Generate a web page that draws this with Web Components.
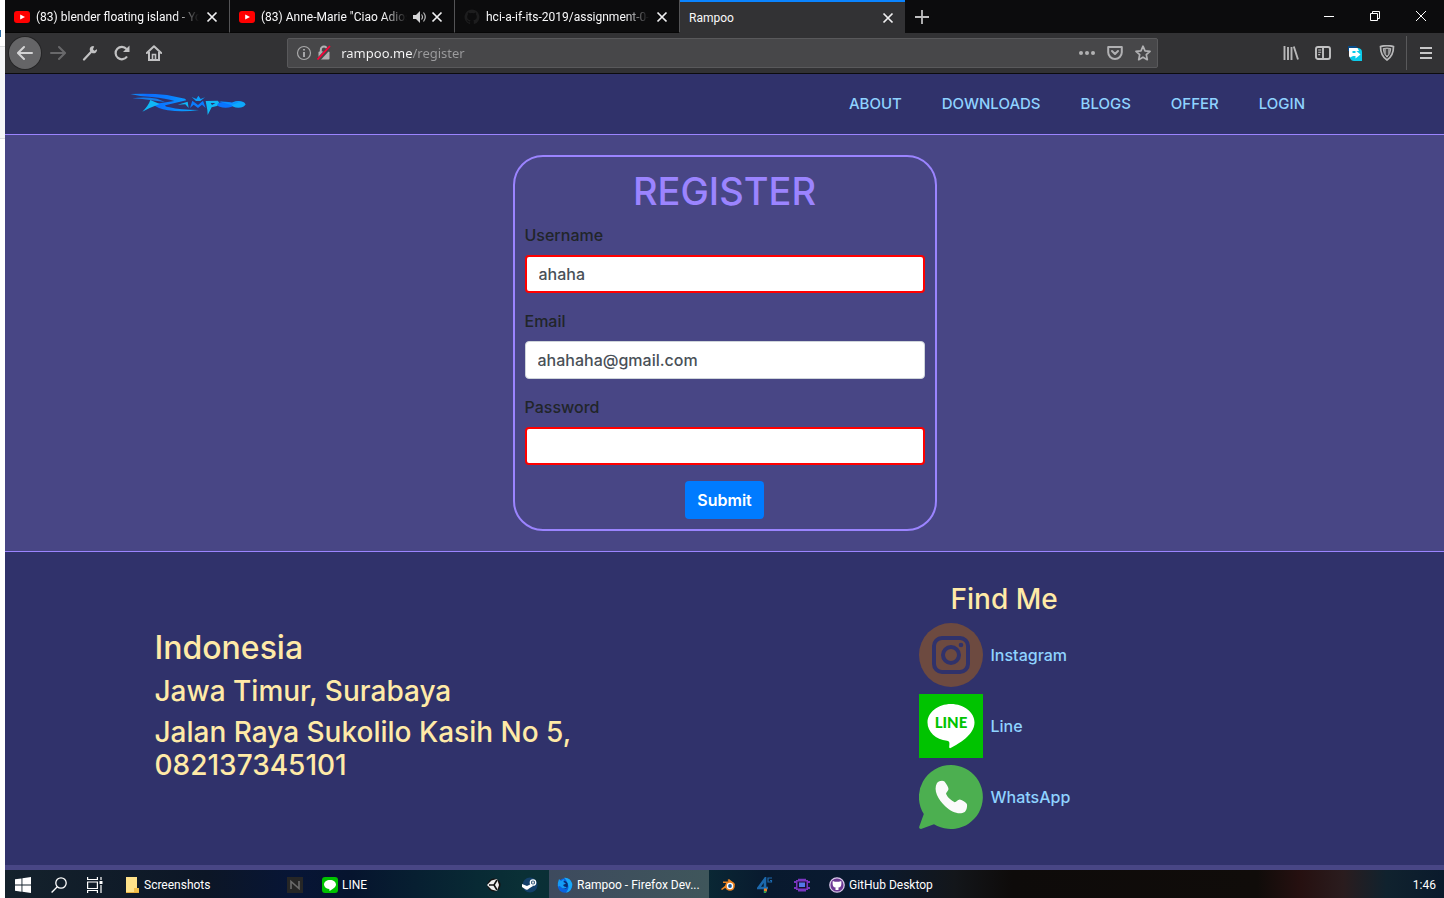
<!DOCTYPE html>
<html lang="en">
<head>
<meta charset="utf-8">
<title>Rampoo</title>
<style>
  html, body { margin: 0; }
  body { background: #fff; font-family: Inter, "Noto Sans", sans-serif; }
</style>
</head>
<body>
<desktop-screen></desktop-screen>
<script>
const SHARED = `
  *, *::before, *::after { box-sizing: border-box; }
  svg { display: block; flex: none; }
  button { font: inherit; color: inherit; background: none; border: 0; padding: 0; margin: 0; cursor: pointer; }
  a { color: inherit; text-decoration: none; }
`;
function define(name, css, html, setup) {
  customElements.define(name, class extends HTMLElement {
    connectedCallback() {
      if (this.shadowRoot) return;
      const root = this.attachShadow({ mode: 'open' });
      root.innerHTML = `<style>${SHARED}${css}</style>${html}`;
      if (setup) setup(this, root);
    }
  });
}

const YT = `<svg slot="icon" width="16" height="16" viewBox="0 0 16 16"><rect y="2" width="16" height="12" rx="3" fill="#f00"/><path d="M6.2 5.4v5.2L11 8z" fill="#fff"/></svg>`;
const OCTO = `<svg slot="icon" width="16" height="16" viewBox="0 0 16 16"><path fill="#1d1d1e" d="M8 .5a7.5 7.5 0 0 0-2.4 14.6c.4.1.5-.2.5-.4v-1.4c-2.1.5-2.5-.9-2.5-.9-.3-.9-.8-1.1-.8-1.1-.7-.5 0-.5 0-.5.8.1 1.2.8 1.2.8.6 1.2 1.7.8 2.1.6.1-.5.3-.8.5-1-1.700-.2-3.400-.8-3.400-3.700 0-.8.3-1.500.8-2-.1-.2-.3-1 .1-2 0 0 .6-.2 2 .8a7 7 0 0 1 3.800 0c1.400-1 2-.8 2-.8.4 1 .2 1.800.1 2 .5.5.8 1.200.8 2 0 2.900-1.800 3.500-3.500 3.700.3.2.5.7.5 1.400v2.100c0 .2.1.4.5.4A7.500 7.500 0 0 0 8 .5z"/></svg>`;

/* ---------- browser window chrome ---------- */
define('browser-tab', `
  :host { display: flex; flex: 0 1 225px; min-width: 0; align-items: center; gap: 6px; height: 33px; padding: 2px 10px 0 9px;
          color: #f9f9fa; font: 12px/16px Roboto, "Noto Sans", sans-serif; border-right: 1px solid #545456; border-bottom: 1px solid #060606; }
  :host([active]) { background: #323234; border-right: 0; border-bottom: 0; box-shadow: inset 0 2px #0a84ff; }
  .title { flex: 1; min-width: 0; overflow: hidden; white-space: nowrap; }
  :host(:not([active])) .title { -webkit-mask-image: linear-gradient(to left, transparent, #000 24px); mask-image: linear-gradient(to left, transparent, #000 24px); }
  ::slotted([slot="sound"]) { margin-right: -3px; }
`, `<slot name="icon"></slot><span class="title"><slot></slot></span><slot name="sound"></slot>
  <button aria-label="Close tab"><svg width="14" height="14" viewBox="0 0 14 14"><path d="M2.500 2.500l9 9M11.500 2.500l-9 9" stroke="#f0f0f1" stroke-width="1.700" fill="none"/></svg></button>`);

define('tab-strip', `
  :host { display: flex; height: 33px; background: #0c0c0d; }
  .new { width: 34px; display: grid; place-items: center; }
  .win { margin-left: auto; display: flex; }
  .win button { width: 46px; height: 32px; display: grid; place-items: center; }
`, `
  <browser-tab>${YT}(83) blender floating island - YouTube</browser-tab>
  <browser-tab>${YT}(83) Anne-Marie "Ciao Adios" - YouTube
    <svg slot="sound" width="14" height="14" viewBox="0 0 14 14"><path d="M0 5h3l4-4v12L3 9H0z" fill="#d4d4d5"/><path d="M8.500 4.500q2 2.500 0 5M10.500 2.500q3.500 4.500 0 9" fill="none" stroke="#bbb" stroke-width="1.200"/></svg>
  </browser-tab>
  <browser-tab>${OCTO}hci-a-if-its-2019/assignment-0-group</browser-tab>
  <browser-tab active>Rampoo</browser-tab>
  <button class="new" aria-label="New tab"><svg width="14" height="14" viewBox="0 0 14 14"><path d="M7 0v14M0 7h14" stroke="#bebebf" stroke-width="1.800"/></svg></button>
  <div class="win">
    <button aria-label="Minimize"><svg width="10" height="10"><path d="M0 5.500h10" stroke="#fff"/></svg></button>
    <button aria-label="Restore"><svg width="10" height="10" fill="none" stroke="#fff"><path d="M.5 2.500h7v7h-7zM2.500 2.500v-2h7v7h-2"/></svg></button>
    <button aria-label="Close"><svg width="10" height="10" stroke="#fff"><path d="M0 0l10 10M10 0L0 10"/></svg></button>
  </div>`);

define('address-bar', `
  :host { display: flex; align-items: center; height: 30px; padding: 0 6px 0 8px; background: #474749; border: 1px solid #59595b; border-radius: 2px; }
  input { flex: 1; min-width: 0; margin: 0 0 0 9px; padding: 0; border: 0; outline: 0; font: 13px/20px "Noto Sans", sans-serif; color: #f9f9fa;
          background: linear-gradient(to right, #f9f9fa 71px, #9c9c9e 71px); -webkit-background-clip: text; background-clip: text; -webkit-text-fill-color: transparent; }
  .acts { display: flex; gap: 12px; }
  .ids { display: flex; gap: 4px; }
`, `
  <span class="ids">
  <svg width="16" height="16" viewBox="0 0 16 16"><circle cx="8" cy="8" r="6.500" fill="none" stroke="#a9a9aa" stroke-width="1.200"/><path d="M8 7v5M8 4v1.600" stroke="#b1b1b3" stroke-width="1.800"/></svg>
  <svg width="16" height="16" viewBox="0 0 16 16"><path d="M4.800 7V4.800a3.200 3.200 0 0 1 6.400 0V7" fill="none" stroke="#b1b1b3" stroke-width="2"/><rect x="2.500" y="6.500" width="11" height="8" rx="1" fill="#b1b1b3"/><path d="M2 15L14.500 1.500" stroke="#474749" stroke-width="4"/><path d="M1.500 14.500L14 1" stroke="#ff0039" stroke-width="1.800"/></svg>
  </span>
  <input aria-label="Address" value="rampoo.me/register">
  <span class="acts">
    <button aria-label="Page actions"><svg width="16" height="16" fill="#b1b1b3"><circle cx="2" cy="8" r="2"/><circle cx="8" cy="8" r="2"/><circle cx="14" cy="8" r="2"/></svg></button>
    <button aria-label="Save to Pocket"><svg width="16" height="16" fill="none" stroke="#b1b1b3" stroke-width="2" stroke-linecap="round" stroke-linejoin="round"><path d="M1.200 2h13.600v5.200a6.800 6.800 0 0 1-13.600 0zM5 6l3 3 3-3"/></svg></button>
    <button aria-label="Bookmark"><svg width="16" height="16" fill="none" stroke="#b1b1b3" stroke-width="1.700" stroke-linejoin="round"><path d="M8 1.200l2 4.600 5 .5-3.700 3.400 1 5L8 12.200l-4.300 2.500 1-5L1 6.300l5-.5z"/></svg></button>
  </span>`);

define('tool-bar', `
  :host { display: flex; align-items: center; height: 41px; padding: 0 2px 0 4px; background: #323234; border-bottom: 1px solid #0c0c0d; }
  button { width: 32px; height: 32px; flex: none; display: grid; place-items: center; }
  .back { border-radius: 50%; background: #656567; box-shadow: 0 0 0 1px #252526; margin-right: 1px; }
  .gap { flex: 117 1 0; }
  address-bar { flex: 853 1 0; }
  .sep { width: 1px; height: 34px; margin: 0 3px; background: #59595b; }
`, `
  <button class="back" aria-label="Back"><svg width="16" height="16" fill="none" stroke="#d4d4d5" stroke-width="2" stroke-linecap="round"><path d="M15 8H1.500M7 2L1 8l6 6"/></svg></button>
  <button aria-label="Forward"><svg width="16" height="16" fill="none" stroke="#69696b" stroke-width="2" stroke-linecap="round"><path d="M1 8h13.500M9 2l6 6-6 6"/></svg></button>
  <button aria-label="Developer tools"><svg width="16" height="16"><path d="M2 14.500l7-7.500" stroke="#c2c2c3" stroke-width="2.200" stroke-linecap="round"/><path d="M11 1c-2.500.3-3.800 2.400-3 4.800l2.400 2.400c2.300.7 4.500-.8 4.700-3.200l-.3-.8-2.400 1.500-1.500-1.500 1.300-2.600z" fill="#c2c2c3"/></svg></button>
  <button aria-label="Reload"><svg width="16" height="16"><path d="M13 11.500A6.200 6.200 0 1 1 12.500 4" fill="none" stroke="#c2c2c3" stroke-width="2.200"/><path d="M15.500.5V7H9z" fill="#c2c2c3"/></svg></button>
  <button aria-label="Home"><svg width="16" height="16" fill="none" stroke="#c2c2c3"><path d="M.8 8L8 1.200 15.200 8" stroke-width="2" stroke-linecap="round" stroke-linejoin="round"/><path d="M3 7v8h10V7" stroke-width="2"/><path d="M6.500 14V9.500h3V14" stroke-width="1.600"/></svg></button>
  <span class="gap"></span>
  <address-bar></address-bar>
  <span class="gap"></span>
  <button aria-label="Library"><svg width="16" height="16" stroke="#b7b7b8" stroke-width="1.900"><path d="M1.500 1v14M5 2v13M8.500 2v13M10.800 1.500l4.200 13"/></svg></button>
  <button aria-label="Sidebar"><svg width="16" height="16" fill="none" stroke="#c2c2c3" stroke-width="1.900"><rect x="1" y="2" width="14" height="12" rx="2"/><path d="M8 2v12"/><path d="M3.200 5h3M3.200 7.300h3M3.200 9.600h2" stroke-width="1.100"/></svg></button>
  <button aria-label="Extension"><svg width="16" height="16"><path d="M2 3h9q4 .5 4 4v9H7q-3 0-4-3z" fill="#0ccbea"/><path d="M1 1h8l2 2H3v3H1z" fill="#064a86"/><path d="M2 3h8.500L12 6H6v5l-3 1.500q-1-.5-1-2z" fill="#fff"/><path d="M5.500 6H8v2H5.500z" fill="#0ccbea"/><path d="M4 8h4.500V5.200L13.500 9.500 8.500 13.500V11H4z" fill="#fff"/></svg></button>
  <button aria-label="Shield"><svg width="16" height="16" fill="none" stroke="#b9b9ba"><path d="M1.500 1.600Q8-.4 14.500 1.600 14.500 11 8 15 1.500 11 1.500 1.600z" stroke-width="1.700"/><path d="M4.200 3.600q3.800-1 7.600 0-.3 5.500-3.800 8.600-3.500-3.100-3.800-8.600z" fill="#8f8f90"/><path d="M8 4v6" stroke="#323234" stroke-width="1.600"/></svg></button>
  <span class="sep"></span>
  <button aria-label="Menu"><svg width="12" height="14" stroke="#c8c8c9" stroke-width="2"><path d="M0 2h12M0 7h12M0 12h12"/></svg></button>`);

/* ---------- the web site ---------- */
define('site-logo', `:host { display: block; }`, `
  <a href="#" aria-label="Rampoo home"><svg width="117" height="24" viewBox="31 38 351 72">
    <defs><linearGradient id="g"><stop stop-color="#1590f4"/><stop offset=".25" stop-color="#0a6cff"/><stop offset=".55" stop-color="#0a7cff"/><stop offset="1" stop-color="#0bb0ff"/></linearGradient></defs>
    <path fill="url(#g)" d="M32 44Q90 41 142 47L196 58 200 63 140 77Q128 80 150 84 180 92 238 92 190 99 144 93 114 88 100 75L164 65Q140 57 96 53 60 51 32 44z"/>
    <path fill="#157ce8" d="M38 57Q74 51 112 58L136 68 96 63Q68 58 38 57z"/>
    <path fill="#10b8f6" d="M92 62L120 74 90 86 68 97Q86 80 92 62z"/>
    <path fill="#10b8f6" d="M174 76L204 67 207 86 197 75z"/>
    <path fill="#0a7cff" d="M211 86L218 64 235 77 250 64 258 86 247 76 235 86 222 76z"/>
    <path fill="#0aa0ff" d="M216 53L230 59 236 49 243 59 256 54 242 65 229 65z"/>
    <path fill="#10b8f6" d="M258 65L294 64Q304 72 292 80L276 84 264 107 263 92z"/>
    <path fill="#30326b" d="M273 71h14l-10 6z"/>
    <ellipse cx="318" cy="76" rx="25" ry="9" fill="#0a74ff"/><ellipse cx="356" cy="75" rx="21" ry="10" fill="#0ea8fa"/>
    <path fill="#0a90ff" d="M296 65l40 5 30-5-30 13z"/>
  </svg></a>`);

define('site-nav', `
  :host { display: flex; align-items: center; justify-content: space-between; height: 61px; padding: 0 139px 0 125px;
          background: #30326b; border-bottom: 1px solid #9b84ff; color: #8fd3ff; font: 500 15px/24px Inter, sans-serif; }
  nav { display: flex; gap: 40px; }
`, `<site-logo></site-logo>
  <nav><a href="#">ABOUT</a><a href="#">DOWNLOADS</a><a href="#">BLOGS</a><a href="#">OFFER</a><a href="#">LOGIN</a></nav>`);

define('form-field', `
  :host { display: flex; flex-direction: column; gap: 8px; }
  label { color: #212529; font: 500 16px/24px Inter, sans-serif; }
  input { width: 100%; height: 38px; margin: 0; padding: 0 12px; border: 1px solid #ced4da; border-radius: 4px; background: #fff;
          color: #495057; font: 500 16px/24px Inter, sans-serif; outline: 0; }
  :host([invalid]) input { border: 2px solid #f00; }
`, `<label for="f"></label><input id="f">`, (host, root) => {
  root.querySelector('label').textContent = host.getAttribute('label');
  const input = root.querySelector('input');
  input.type = host.getAttribute('type');
  input.value = host.getAttribute('value') || '';
});

define('register-form', `
  :host { display: block; padding: 20px; background: #484685; border-bottom: 1px solid #9b84ff; }
  form { display: flex; flex-direction: column; gap: 16px; max-width: 424px; margin: 0 auto; padding: 10px; border: 2px solid #9b84ff; border-radius: 30px; }
  h1 { margin: 0 0 -8px; text-align: center; color: #9b84ff; font: 500 38px/48px Inter, sans-serif; }
  button { align-self: center; height: 38px; padding: 0 12px; border-radius: 4px; background: #007bff; color: #fff; font: 600 16px/24px Inter, sans-serif; }
`, `<form onsubmit="return false">
  <h1>REGISTER</h1>
  <form-field label="Username" type="text" value="ahaha" invalid></form-field>
  <form-field label="Email" type="email" value="ahahaha@gmail.com"></form-field>
  <form-field label="Password" type="password" invalid></form-field>
  <button type="submit">Submit</button>
</form>`);

define('contact-link', `
  :host { display: block; }
  a { display: flex; align-items: center; gap: 8px; color: #8fd3ff; font: 500 16px/24px Inter, sans-serif; }
`, `<a href="#"><slot name="icon"></slot><slot></slot></a>`);

define('site-footer', `
  :host { display: block; flex: 1; background: #30326b; border-bottom: 5px solid #484685; color: #ffeaa7; }
  .wrap { display: grid; grid-template-columns: 1fr 376px; align-items: center; max-width: 1140px; margin: 0 auto; padding: 30px 0; }
  h2, h3 { margin: 0; font: 500 28px/33px Inter, sans-serif; }
  h2 { font-size: 32px; line-height: 38px; }
  address { display: grid; gap: 8px; font-style: normal; }
  .find { display: grid; gap: 7px; padding-top: 1px; }
  .find h3 { padding-left: 32px; }
`, `<div class="wrap">
  <address><h2>Indonesia</h2><h3>Jawa Timur, Surabaya</h3><h3>Jalan Raya Sukolilo Kasih No 5,<br>082137345101</h3></address>
  <section class="find"><h3>Find Me</h3>
    <contact-link><svg slot="icon" width="64" height="64" viewBox="0 0 64 64"><circle cx="32" cy="32" r="32" fill="#6d4a40"/><g fill="none" stroke="#30326b"><rect x="15" y="15" width="34" height="34" rx="8" stroke-width="4"/><circle cx="32" cy="32" r="8" stroke-width="4"/></g><circle cx="42" cy="22" r="2.300" fill="#30326b"/></svg>Instagram</contact-link>
    <contact-link><svg slot="icon" width="64" height="64" viewBox="0 0 64 64"><path fill="#00c300" d="M0 0h64v64H0z"/><path fill="#fff" d="M32 10C19 10 8.500 18.300 8.500 28.500c0 9.300 8.300 17 19.500 18.300 2.500.5 2.700 1.500 2.200 6.200 0 1.200.8 1.400 1.800.8C40 49.500 55.500 41 55.500 28.500 55.500 18.300 45 10 32 10z"/><text x="32" y="34" text-anchor="middle" font-family="Lato, sans-serif" font-weight="900" font-size="15" fill="#00c300">LINE</text></svg>Line</contact-link>
    <contact-link><svg slot="icon" width="64" height="64" viewBox="0 0 64 64"><path fill="#4caf50" d="M32 0a32 32 0 1 1-17 59.200L2 64Q-.5 64 .3 61.500L4.800 49A32 32 0 0 1 32 0z"/><path fill="#fafafa" d="M18 18c2-2.500 6-3 7.500-1.500C27 18.500 29.500 22 29.500 24c0 1.800-2.500 3.200-2.500 4.800 1.500 3.700 5.500 7 8.700 8.400 1.800 0 3-2.700 5-2.700 2 .3 5.500 2.300 7 4.300 1 2 0 6.500-2 8.200-5 3-13 .5-19.500-5.800C19 34.500 14 25 18 18z"/></svg>WhatsApp</contact-link>
  </section>
</div>`);

/* ---------- desktop ---------- */
define('task-item', `
  :host { display: block; flex: 0 0 36px; height: 28px; }
  :host([wide]) { flex: 0 1 160px; min-width: 0; }
  :host([active]) { background: linear-gradient(90deg, #3d4a5e, #3f565b); }
  button { display: flex; align-items: center; justify-content: center; gap: 4px; width: 100%; height: 28px; padding-top: 2px; color: #fff; font: 12px/16px Roboto, "Noto Sans", sans-serif; white-space: nowrap; }
  :host([wide]) button { justify-content: flex-start; padding-left: 8px; }
`, `<button><slot name="icon"></slot><slot></slot></button>`);

define('task-bar', `
  :host { display: flex; gap: 1px; height: 28px; background: linear-gradient(90deg, #14222c 0, #0c1626 14%, #071536 20%, #06142e 24%, #082a34 33%, #0a3036 36%, #0a2a35 48%, #08192e 53%, #0a1a30 60%, #13161a 66%, #0e0b0a 70%, #100c0a 87%, #261010 90%, #2a1c1e 93%, #10222e 96%, #0a1a2c 100%); }
  .sys { display: flex; margin-right: 2px; }
  time { margin-left: auto; padding-right: 8px; color: #fff; font: 12px/30px Roboto, "Noto Sans", sans-serif; }
`, `
  <div class="sys">
    <task-item><svg slot="icon" width="16" height="16" fill="#fff"><path d="M0 2.300L6.500 1.400V7.600H0zM7.400 1.300L16 0v7.600H7.400zM0 8.500h6.500v6.200L0 13.800zM7.400 8.500H16V16l-8.600-1.200z"/></svg></task-item>
    <task-item><svg slot="icon" width="16" height="16" fill="none" stroke="#fff" stroke-width="1.300"><circle cx="10" cy="6" r="5.200"/><path d="M6.300 9.700L.6 15.500"/></svg></task-item>
    <task-item><svg slot="icon" width="16" height="16" fill="none" stroke="#fff" stroke-width="1.200"><path d="M.6 0v2.500h9.800V0M.6 5v6.500h9.800V5zM.6 16v-2.500h9.800V16M14 0v3M14 8v8"/><path d="M12.500 4h3v3h-3z" fill="#fff" stroke="none"/></svg></task-item>
  </div>
  <task-item wide><svg slot="icon" width="16" height="16"><path d="M2 0h11v16H2z" fill="#ffe28a"/><path d="M10 11h5v5h-5z" fill="#f4c04c"/><path d="M2 15h13v1H2z" fill="#e9b23f"/></svg>Screenshots</task-item>
  <task-item><svg slot="icon" width="16" height="16"><path d="M0 0h16v16H0z" fill="#262626"/><path d="M4 12V4.500l8 7V4" fill="none" stroke="#6c6c6c" stroke-width="1.600"/></svg></task-item>
  <task-item wide><svg slot="icon" width="16" height="16"><rect width="16" height="16" rx="3" fill="#00c300"/><path d="M8 3c-3.400 0-6 2-6 4.600 0 2.300 2 4 5 4.500.6.300.5 1 .4 2C10 12.500 14 10.500 14 7.600 14 5 11.400 3 8 3z" fill="#fff"/></svg>LINE</task-item>
  <task-item><svg slot="icon" width="16" height="16"><circle cx="9" cy="8" r="6.500" fill="#16110f"/><path d="M2 8l4.500-4.500L12 2l2 6-2 6-5.500-1.500z" fill="#eee"/><path d="M4 8h5l3-5M9 8l3 5" stroke="#111" stroke-width="1.600" fill="none"/></svg></task-item>
  <task-item><svg slot="icon" width="16" height="16"><defs><linearGradient id="s" x2="0" y2="1"><stop stop-color="#111d2e"/><stop offset="1" stop-color="#1572a8"/></linearGradient></defs><circle cx="8" cy="8" r="7.500" fill="#14406a"/><circle cx="11" cy="5.500" r="2.700" fill="none" stroke="#fff" stroke-width="1.300"/><circle cx="11" cy="5.500" r="1.200" fill="#ddd"/><path d="M0 7l5 2 4-2 2 2-4 2.500A2.500 2.500 0 0 1 3 12L0 10z" fill="#fff"/></svg></task-item>
  <task-item wide active><svg slot="icon" width="16" height="16"><circle cx="8" cy="8.500" r="7.300" fill="#0a62e0"/><path d="M7 .8Q13 0 15.300 7 15 14.500 9 15.700 13 11 10.500 6.500 9.500 2.500 7 .8z" fill="#19a9f8"/><path d="M4.500 5.500Q8 2.500 10.500 6 12 11 8 12 4.500 11.500 4.500 8.500z" fill="#082c72"/><path d="M2 2l2 2 3-2-.5 3L9 6.500 6 8q1 2.500 4 2-3 3-6 0Q2 8 1 10 .5 5 2 2z" fill="#159bf5"/></svg>Rampoo - Firefox Dev...</task-item>
  <task-item><svg slot="icon" width="16" height="16"><path d="M1 12L8.500 6H3V4.500h6L7.500 3 9 2l6 5-4 6-6-2-3 2z" fill="#ed8421"/><circle cx="10" cy="9" r="4.800" fill="#ed8421"/><circle cx="10" cy="9" r="3.200" fill="#fff"/><circle cx="10" cy="9" r="1.900" fill="#1a5a9a"/></svg></task-item>
  <task-item><svg slot="icon" width="16" height="16" fill="none" stroke="#1c69ae"><path d="M8 16V2L1.500 11H11" stroke-width="2.600"/><path d="M15 1h-4v4h3.500V3.500H13" stroke-width="1.200"/><path d="M7 11.500h3v3H7z" fill="#e7852b" stroke="none"/><path d="M7 14h2v2H7z" fill="#3aa045" stroke="none"/></svg></task-item>
  <task-item><svg slot="icon" width="16" height="16"><path d="M2 3h12v10H2zM0 4h3v2H0zM13 4h3v2h-3zM0 10h3v2H0zM13 10h3v2h-3zM4 13h8v1.500H4zM4 1.800h8V3H4z" fill="#7a35c0"/><path d="M3.500 4.500h9v7h-9z" fill="#180f30"/><path d="M5 5.500h6v4.500H5z" fill="#5577e8"/></svg></task-item>
  <task-item wide><svg slot="icon" width="16" height="16"><circle cx="8" cy="8" r="7.200" fill="#6e3a94" stroke="#dac6ea" stroke-width="1.300"/><path d="M3.800 4L6 4.700h4l2.200-.7Q12.600 5.500 12.300 7.500 12.300 10.500 8 11 3.700 10.500 3.700 7.500 3.400 5.500 3.800 4z" fill="#fff"/><path d="M6.500 10.500h3V13h-3z" fill="#fff"/></svg>GitHub Desktop</task-item>
  <time>1:46</time>`);

define('window-edge', `
  :host { display: flex; flex-direction: column; width: 5px; background: #fff; }
  .top { height: 46px; display: flex; align-items: flex-end; padding-bottom: 9px; }
  .top i { width: 1px; height: 7px; background: #2b6ca5; }
  .mid { height: 93px; background: #f5f6f7; border: solid #dcdddf; border-width: 1px 0; }
`, `<div class="top"><i></i></div><div class="mid"></div>`);

define('desktop-screen', `
  :host { display: grid; grid-template-columns: 5px minmax(0, 1fr); min-height: 100vh; }
  main { display: flex; flex-direction: column; min-height: 100vh; }
`, `<window-edge></window-edge>
<main>
  <tab-strip></tab-strip>
  <tool-bar></tool-bar>
  <site-nav></site-nav>
  <register-form></register-form>
  <site-footer></site-footer>
  <task-bar></task-bar>
</main>`);
</script>
</body>
</html>
